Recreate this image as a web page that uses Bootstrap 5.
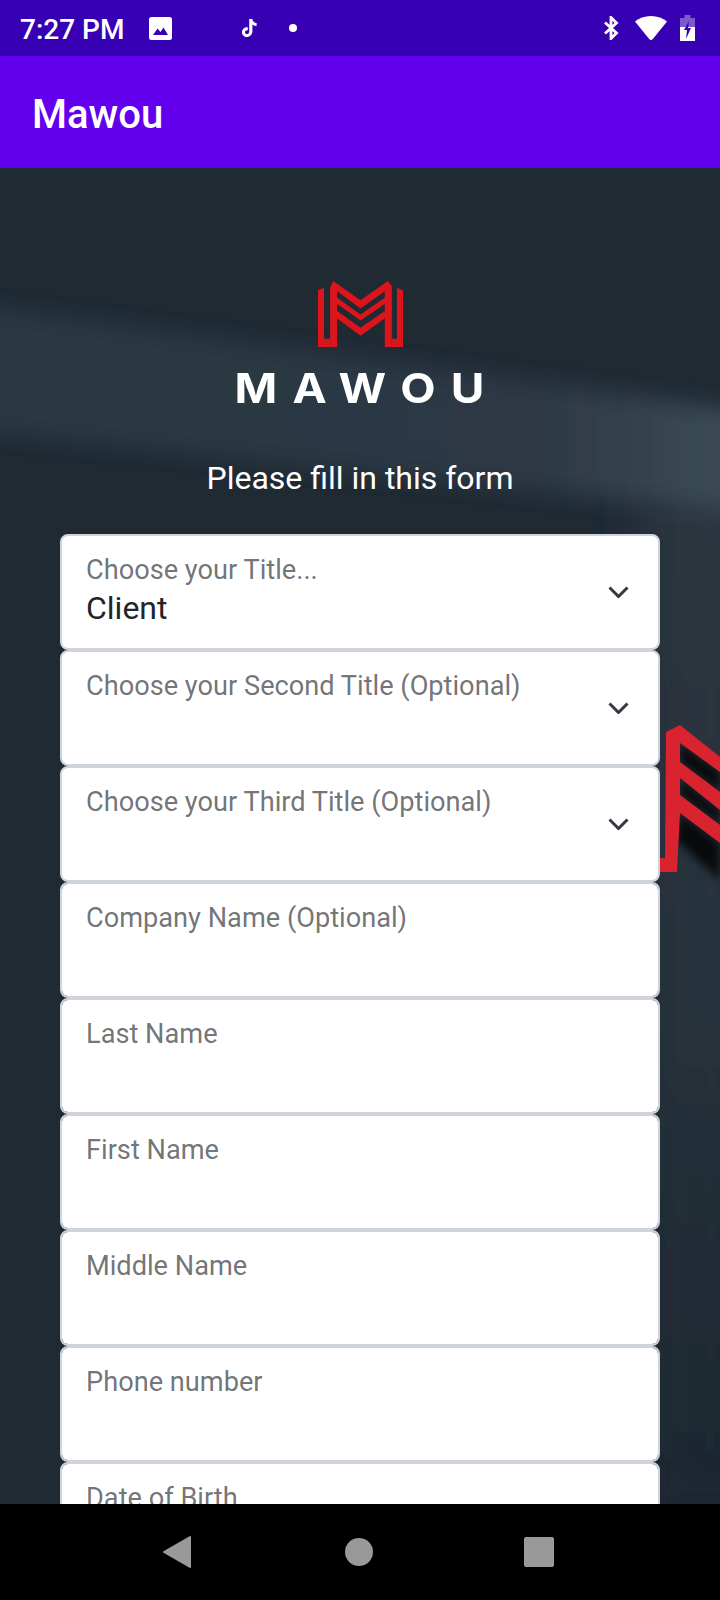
<!DOCTYPE html>
<html lang="en">
  <head>
    <meta charset="UTF-8" />
    <meta name="viewport" content="width=device-width, initial-scale=1.0" />
    <title>Mawou</title>
    <link href="https://cdn.jsdelivr.net/npm/bootstrap@5.3.0/dist/css/bootstrap.min.css" rel="stylesheet" />
    <style>
      body {
        font-family: Roboto, "Liberation Sans", sans-serif;
        overflow: hidden;
      }
      .mw-screen {
        height: 1600px;
      }
      .mw-status {
        height: 56px;
        background: #3700b3;
        color: #fff;
        font-size: 28px;
      }
      .mw-time {
        margin-left: 20px;
        padding-top: 3px;
        width: 129px;
        font-weight: 500;
      }
      .mw-tiktok {
        margin-left: 70px;
      }
      .mw-dot {
        margin-left: 32px;
      }
      .mw-wifi {
        margin-left: 16px;
      }
      .mw-battery {
        margin-left: 13px;
        margin-right: 25px;
      }
      .mw-appbar {
        height: 112px;
        background: #6200ee;
        padding: 5px 32px 0;
      }
      .mw-appbar .navbar-brand {
        color: #fff;
        font-size: 40px;
        font-weight: 500;
        padding: 0;
        margin: 0;
      }
      .mw-main {
        background: #1f2a33;
        overflow: hidden;
      }
      .mw-backdrop {
        position: absolute;
        top: 0;
        left: 0;
      }
      .mw-content {
        position: relative;
        padding: 113px 60px 0;
      }
      .mw-logo {
        display: block;
        margin: 0 auto;
        width: 85px;
        height: 66px;
      }
      .mw-wordmark {
        font-family: Inter, "Liberation Sans", sans-serif;
        font-weight: 700;
        font-size: 41px;
        line-height: 40px;
        letter-spacing: 13.500px;
        margin: 21px 0 0 14px;
        color: #fff;
        transform: scaleX(1.12);
      }
      .mw-heading {
        font-size: 32px;
        line-height: 48px;
        margin: 46px 0 32px;
        color: #fff;
        font-weight: 400;
      }
      .form-floating.mw-field > .form-control,
      .form-floating.mw-field > .form-select {
        height: 116px;
        min-height: 116px;
        border: 2px solid #ced4da;
        border-radius: 8px;
        font-size: 32px;
        line-height: 48px;
        padding: 48px 70px 16px 24px;
      }
      .form-floating.mw-field > .form-select {
        background-image: url("data:image/svg+xml,%3csvg xmlns='http://www.w3.org/2000/svg' viewBox='0 0 21 12'%3e%3cpath fill='none' stroke='%23343a40' stroke-width='3' d='M1.500 1.500 10.500 10.500 19.500 1.500'/%3e%3c/svg%3e");
        background-position: right 29px center;
        background-size: 21px 12px;
      }
      .form-floating.mw-field > label,
      .form-floating.mw-field > .form-select ~ label {
        font-size: 27.2px;
        line-height: 42px;
        padding: 15px 26px;
        border: 0;
        color: rgba(33, 37, 41, 0.65);
        transform: none;
        opacity: 1;
      }
      .mw-nav {
        height: 96px;
        background: #000;
        gap: 151px;
        padding-right: 4px;
      }
      .mw-back {
        margin-right: 3px;
      }
    </style>
  </head>

  <body>
    <div class="mw-screen d-flex flex-column">
      <div class="mw-status d-flex align-items-center flex-shrink-0">
        <span class="mw-time">7:27 PM</span>
        <svg width="23" height="23" viewBox="0 0 23 23">
          <rect width="23" height="23" rx="2.500" fill="#fff" />
          <path fill="#3700b3" d="M4 18 8.500 11.500 11.500 15 14.500 10.500 19 18Z" />
        </svg>
        <svg class="mw-tiktok" width="15" height="18" viewBox="0 0 15 18">
          <path fill="#fff" d="M7.200 0H10.400C10.600 2.200 12.200 3.800 14.600 4V7C12.800 7 11.400 6.400 10.400 5.600V12C10.400 15.400 8 18 4.900 18 2.100 18 0 15.800 0 13.200 0 10.200 2.600 8 5.800 8.300V11.300C4.300 11 3 11.900 3 13.200 3 14.300 3.900 15.100 4.900 15.100 6.200 15.100 7.200 14 7.200 12.400Z" />
        </svg>
        <svg class="mw-dot" width="8" height="8" viewBox="0 0 8 8"><circle cx="4" cy="4" r="4" fill="#fff" /></svg>
        <svg class="ms-auto" width="16" height="24" viewBox="0 0 16 24">
          <path fill="none" stroke="#fff" stroke-width="2.800" d="M2 6.500 13.500 17 8 22.500V1.500L13.500 7 2 17.500" />
        </svg>
        <svg class="mw-wifi" width="32" height="24" viewBox="0 0 32 24">
          <path fill="#fff" d="M16 0C9.500 0 4.200 2.300 0 5.500L14.200 23C15.200 24.200 16.800 24.200 17.800 23L32 5.500C27.800 2.300 22.500 0 16 0Z" />
        </svg>
        <svg class="mw-battery" width="15" height="26" viewBox="0 0 15 26">
          <path fill="#fff" opacity="0.35" d="M0 3H4.500V0H10.500V3H15V12H0Z" />
          <path fill="#fff" d="M0 12H15V26H0Z" />
          <path fill="#3700b3" d="M9 6 4 15H7L6 24 11 13H8Z" />
        </svg>
      </div>

      <nav class="navbar mw-appbar flex-shrink-0">
        <span class="navbar-brand">Mawou</span>
      </nav>

      <main class="mw-main position-relative flex-grow-1">
        <svg class="mw-backdrop" width="720" height="1336" viewBox="0 168 720 1336">
          <defs>
            <filter id="soft" x="-20%" y="-30%" width="140%" height="160%"><feGaussianBlur stdDeviation="11" /></filter>
            <filter id="softer" x="-40%" y="-20%" width="180%" height="140%"><feGaussianBlur stdDeviation="24" /></filter>
            <filter id="shade" x="-30%" y="-30%" width="160%" height="160%"><feGaussianBlur stdDeviation="4" /></filter>
            <linearGradient id="band" gradientUnits="userSpaceOnUse" x1="0" x2="720" y1="0" y2="0">
              <stop offset="0" stop-color="#2b3742" />
              <stop offset="0.75" stop-color="#2d3945" />
              <stop offset="1" stop-color="#3b4a54" />
            </linearGradient>
            <linearGradient id="side" x1="0" x2="0" y1="0" y2="1">
              <stop offset="0" stop-color="#2b353f" />
              <stop offset="0.45" stop-color="#28323b" />
              <stop offset="1" stop-color="#1c2730" />
            </linearGradient>
          </defs>
          <rect x="640" y="480" width="140" height="1040" fill="url(#side)" filter="url(#softer)" />
          <path fill="url(#band)" filter="url(#soft)" d="M-100 296 820 421V521L-100 422Z" />
          <path fill="#000" opacity="0.8" filter="url(#shade)" d="M680 743 720 772V792L680 762ZM680 778 720 810V825L680 795ZM680 813 720 843V880L676 840Z" />
          <path fill="#d9232f" d="M680 725 720 757V772L680 743V762L720 792V810L680 778V795L720 825V843L680 813 677 872H660V858H665L666 732Z" />
        </svg>

        <div class="mw-content">
          <svg class="mw-logo" viewBox="0 0 84 65">
            <g fill="#dc141c">
              <path d="M0 9 6 6.500V57H12V65H0Z" />
              <path d="M84 9 78 6.500V57H73V65H84Z" />
              <path fill-rule="evenodd" d="M12 6 15 0 42 19 69 0 73 5V65H66V37L42 54 19 37V65H12ZM19 10V16.500L42 33 66 16.500V10L42 27ZM19 22.500V29.500L42 46 66 29.500V22.500L42 39Z" />
            </g>
          </svg>
          <div class="mw-wordmark text-center">MAWOU</div>
          <h1 class="mw-heading text-center">Please fill in this form</h1>

          <form class="d-flex flex-column">
            <div class="form-floating mw-field">
              <select class="form-select" id="title1">
                <option>Client</option>
                <option>Agent</option>
              </select>
              <label for="title1">Choose your Title...</label>
            </div>
            <div class="form-floating mw-field">
              <select class="form-select" id="title2"><option></option></select>
              <label for="title2">Choose your Second Title (Optional)</label>
            </div>
            <div class="form-floating mw-field">
              <select class="form-select" id="title3"><option></option></select>
              <label for="title3">Choose your Third Title (Optional)</label>
            </div>
            <div class="form-floating mw-field">
              <input type="text" class="form-control" id="company" placeholder=" " />
              <label for="company">Company Name (Optional)</label>
            </div>
            <div class="form-floating mw-field">
              <input type="text" class="form-control" id="lastName" placeholder=" " />
              <label for="lastName">Last Name</label>
            </div>
            <div class="form-floating mw-field">
              <input type="text" class="form-control" id="firstName" placeholder=" " />
              <label for="firstName">First Name</label>
            </div>
            <div class="form-floating mw-field">
              <input type="text" class="form-control" id="middleName" placeholder=" " />
              <label for="middleName">Middle Name</label>
            </div>
            <div class="form-floating mw-field">
              <input type="tel" class="form-control" id="phone" placeholder=" " />
              <label for="phone">Phone number</label>
            </div>
            <div class="form-floating mw-field">
              <input type="text" class="form-control" id="birth" placeholder=" " />
              <label for="birth">Date of Birth</label>
            </div>
          </form>
        </div>
      </main>

      <div class="mw-nav d-flex align-items-center justify-content-center flex-shrink-0">
        <svg class="mw-back" width="28" height="32" viewBox="0 0 28 32"><path fill="#999" stroke="#999" stroke-width="2" stroke-linejoin="round" d="M27 1V31L1 16Z" /></svg>
        <svg width="28" height="28" viewBox="0 0 28 28"><circle cx="14" cy="14" r="14" fill="#999" /></svg>
        <svg width="30" height="30" viewBox="0 0 30 30"><rect width="30" height="30" rx="2" fill="#999" /></svg>
      </div>
    </div>

    <script src="https://cdn.jsdelivr.net/npm/bootstrap@5.3.0/dist/js/bootstrap.bundle.min.js"></script>
  </body>
</html>
